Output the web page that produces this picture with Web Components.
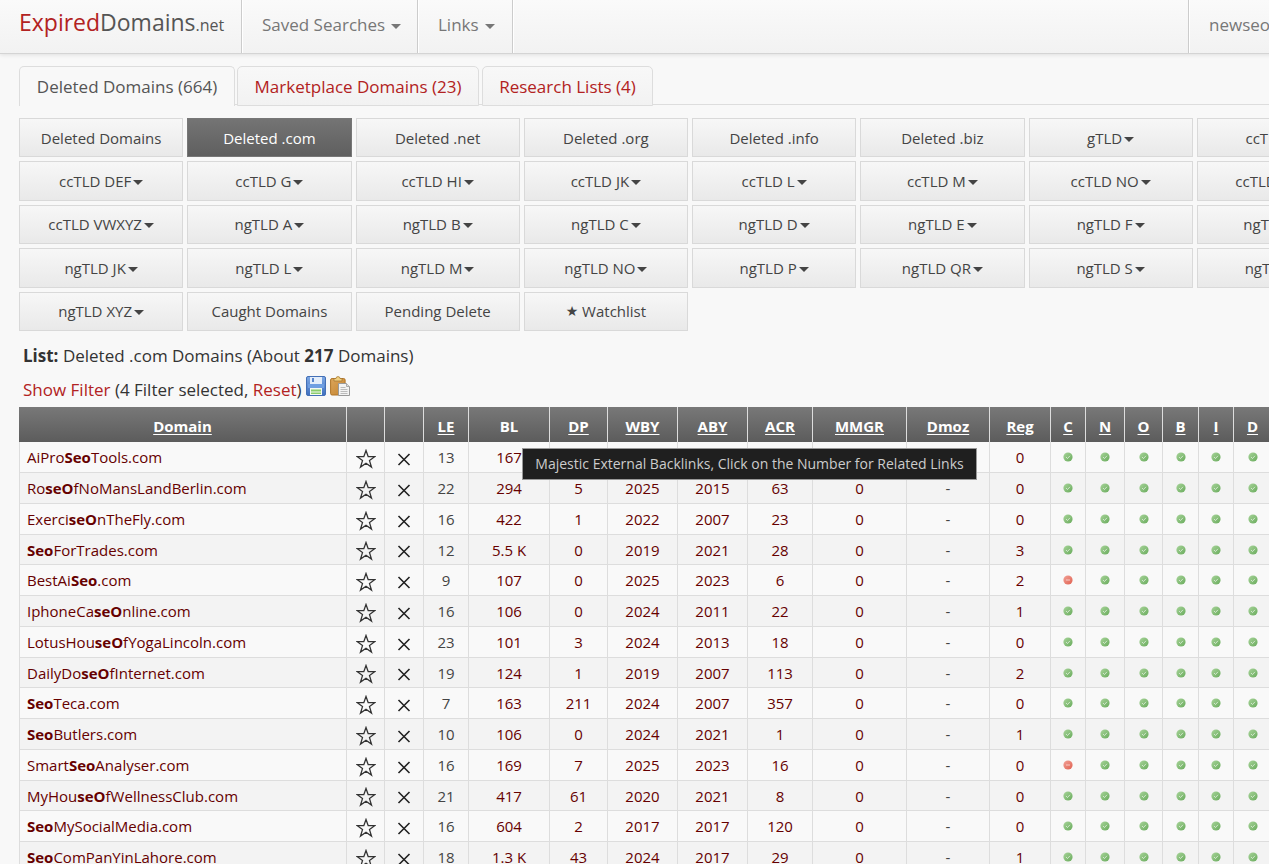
<!DOCTYPE html>
<html lang="en">
<head>
<meta charset="utf-8">
<title>Deleted .com Domains</title>
<style>
  html { overflow: hidden; }
  body { margin: 0; background: #f8f8f8; color: #333; font-family: "Open Sans", "Noto Sans", sans-serif; font-size: 15px; overflow: hidden; }
</style>
</head>
<body>
<site-header user="newseoc"></site-header>
<page-content>
  <list-tabs></list-tabs>
  <tld-nav></tld-nav>
  <list-summary></list-summary>
  <domain-table></domain-table>
</page-content>

<script>
class Base extends HTMLElement {
  constructor() {
    super();
    this.attachShadow({ mode: "open" });
  }
  connectedCallback() {
    this.shadowRoot.innerHTML = this.render();
  }
}

customElements.define("caret-down", class extends Base {
  render() {
    return `<style>
      :host { display: inline-block; width: 10px; height: 5px; vertical-align: middle; }
      svg { display: block; }
    </style><svg width="10" height="5" viewBox="0 0 10 5" aria-hidden="true"><path d="M0 0h10L5 5z" fill="currentColor"/></svg>`;
  }
});

customElements.define("site-header", class extends Base {
  render() {
    return `<style>
      :host { display: block; position: relative; }
      nav { display: flex; height: 53px; border-bottom: 1px solid #d4d4d4; background: linear-gradient(#fafafa, #f2f2f2); box-shadow: 0 1px 4px rgba(0,0,0,.1); margin-right: -100px; }
      a, button { font: inherit; font-size: 17px; line-height: 50px; color: #777; text-decoration: none; background: none; border: 0; margin: 0; padding: 0 20px; border-right: 1px solid #ccc; box-shadow: 1px 0 #fff; white-space: nowrap; text-align: left; }
      a.brand { width: 203px; padding: 0 19px; line-height: 44px; font-size: 23px; color: #555; }
      .brand b { font-weight: 400; color: #b22222; }
      .brand small { font-size: 16px; }
      button { padding-bottom: 3px; }
      caret-down { margin-left: 6px; }
      .saved { width: 176px; }
      .links { width: 95px; }
      .user { margin-left: auto; width: 181px; box-sizing: border-box; border-left: 1px solid #ccc; border-right: 0; box-shadow: inset 1px 0 #fff; }
    </style>
    <nav>
      <a class="brand" href="#home"><b>Expired</b>Domains<small>.net</small></a>
      <button class="saved">Saved Searches<caret-down></caret-down></button>
      <button class="links">Links<caret-down></caret-down></button>
      <a class="user" href="#account">${this.getAttribute("user")}</a>
    </nav>`;
  }
});

customElements.define("page-content", class extends Base {
  render() {
    return `<style>
      :host { display: block; padding-left: 19px; margin-right: -92px; }
    </style><slot></slot>`;
  }
});

customElements.define("list-tabs", class extends Base {
  render() {
    return `<style>
      :host { display: block; padding-top: 12px; }
      nav { display: flex; gap: 3px; height: 38px; border-bottom: 1px solid #ddd; }
      a { box-sizing: border-box; height: 40px; line-height: 39px; font-size: 17px; text-align: center; color: #b22222; text-decoration: none; border: 1px solid #ddd; border-radius: 5px 5px 0 0; background: linear-gradient(#f8f8f8, #f2f2f2); white-space: nowrap; }
      a[aria-current] { color: #555; background: #f8f8f8; border-bottom: 0; margin-right: -1px; }
      .one { width: 216px; } .two { width: 242px; } .three { width: 171px; }
    </style>
    <nav>
      <a class="one" href="#deleted" aria-current="page">Deleted Domains (664)</a>
      <a class="two" href="#market">Marketplace Domains (23)</a>
      <a class="three" href="#research">Research Lists (4)</a>
    </nav>`;
  }
});

customElements.define("tld-nav", class extends Base {
  render() {
    const items = ["Deleted Domains", "Deleted .com", "Deleted .net", "Deleted .org", "Deleted .info", "Deleted .biz", "gTLD", "ccTLD A",
      "ccTLD DEF", "ccTLD G", "ccTLD HI", "ccTLD JK", "ccTLD L", "ccTLD M", "ccTLD NO", "ccTLD PQR",
      "ccTLD VWXYZ", "ngTLD A", "ngTLD B", "ngTLD C", "ngTLD D", "ngTLD E", "ngTLD F", "ngTLD G",
      "ngTLD JK", "ngTLD L", "ngTLD M", "ngTLD NO", "ngTLD P", "ngTLD QR", "ngTLD S", "ngTLD T",
      "ngTLD XYZ", "Caught Domains", "Pending Delete", "<i>★</i> Watchlist"];
    const cell = t => t.includes("TLD")
      ? `<button>${t}<caret-down></caret-down></button>`
      : `<a href="#list"${t === "Deleted .com" ? ' aria-current="page"' : ""}>${t}</a>`;
    return `<style>
      :host { display: block; padding-top: 13px; }
      nav { display: grid; grid-template-columns: repeat(8, 1fr); grid-template-rows: repeat(5, 1fr); gap: 4px; height: 213px; }
      a, button { display: flex; align-items: center; justify-content: center; min-width: 0; margin: 0; padding: 0; font: inherit; font-size: 15px; color: #444; text-decoration: none; white-space: pre; border: 1px solid #d9d9d9; background: linear-gradient(#f7f7f7, #e9e9e9); }
      a[aria-current] { color: #fff; border-color: #777; background: linear-gradient(#747474, #5f5f5f); }
      caret-down { margin: 3px 0 0 2px; }
      i { font: 14px "DejaVu Sans", sans-serif; }
    </style><nav>${items.map(cell).join("")}</nav>`;
  }
});

customElements.define("list-summary", class extends Base {
  render() {
    return `<style>
      :host { display: block; padding: 8px 4px 0; font-size: 17px; }
      p { margin: 0; line-height: 34px; height: 34px; white-space: nowrap; }
      p.filter { display: flex; }
      a { color: #b22222; text-decoration: none; }
      svg { display: block; margin: 3px 0 0 4px; }
    </style>
    <p><b>List:</b> Deleted .com Domains (About <b>217</b> Domains)</p>
    <p class="filter"><span><a href="#filter">Show Filter</a> (4 Filter selected, <a href="#reset">Reset</a>)</span>
      <a href="#save" aria-label="Save"><svg width="20" height="20" viewBox="0 0 20 20">
        <defs><linearGradient id="f" x2="0" y2="1"><stop stop-color="#7da8e4"/><stop offset="1" stop-color="#3f6fbe"/></linearGradient></defs>
        <rect x=".5" y=".5" width="19" height="19" rx="1.5" fill="url(#f)" stroke="#4470b6"/>
        <rect x="4" y="1" width="12" height="7" fill="#e3edfa"/><rect x="6" y="2" width="2" height="4" fill="#5a86cc"/>
        <rect x="2" y="8" width="16" height="4" fill="#6f9fe2"/>
        <rect x="4" y="12" width="12" height="7" fill="#f4faf2"/><rect x="5" y="13.5" width="10" height="2" fill="#8acb6b"/><rect x="5" y="16.5" width="10" height="1.5" fill="#8acb6b"/>
      </svg></a>
      <a href="#copy" aria-label="Copy"><svg width="20" height="20" viewBox="0 0 20 20">
        <defs><linearGradient id="c" x2="1" y2="1"><stop stop-color="#dca55a"/><stop offset="1" stop-color="#c38430"/></linearGradient></defs>
        <rect x=".6" y="2.5" width="14.5" height="16.5" rx="1.5" fill="url(#c)" stroke="#b07528"/>
        <path d="M4 5V2.5h2Q6 .6 8 .6t2 1.9h2V5z" fill="#f0d080" stroke="#a77a35" stroke-width=".8"/>
        <path d="M8.5 7.5h8l3 3v9h-11z" fill="#f3f3f3" stroke="#999"/>
        <path d="M16.5 7.5v3h3" fill="#ddd" stroke="#aaa"/>
        <path d="M10.5 11.5h5M10.5 13.5h7M10.5 15.5h7M10.5 17.5h7" stroke="#bbb"/>
      </svg></a></p>`;
  }
});

customElements.define("status-dot", class extends Base {
  render() {
    const bad = this.hasAttribute("taken");
    const [hi, lo] = bad ? ["#f2a298", "#e0604f"] : ["#a8d49a", "#68ab5b"];
    return `<style>
      :host { display: block; width: 10px; height: 10px; margin: 0 auto; }
      svg { display: block; }
    </style><svg width="10" height="10" viewBox="0 0 10 10" role="img" aria-label="${bad ? "registered" : "available"}">
      <defs><linearGradient id="g" x2="1" y2="1"><stop stop-color="${hi}"/><stop offset="1" stop-color="${lo}"/></linearGradient></defs>
      <circle cx="5" cy="5" r="4.6" fill="url(#g)"/>
      <path d="${bad ? "M3 5h4" : "M3 5l1.5 1.5L7 3.800"}" fill="none" stroke="#fff" stroke-opacity=".6"/>
    </svg>`;
  }
});

customElements.define("info-tip", class extends Base {
  render() {
    return `<style>
      :host { display: block; box-sizing: border-box; height: 32px; line-height: 29px; padding: 0 9px; border: 1px solid #999; background: #1f1f1f; color: #ccc; font-size: 14px; white-space: nowrap; text-align: center; }
    </style><slot></slot>`;
  }
});

customElements.define("domain-table", class extends Base {
  render() {
    const cols = [["Domain", 328], ["", 38], ["", 39], ["LE", 45], ["BL", 81], ["DP", 58], ["WBY", 70], ["ABY", 70], ["ACR", 65],
      ["MMGR", 94], ["Dmoz", 83], ["Reg", 61], ["C", 35], ["N", 39], ["O", 38], ["B", 36], ["I", 35], ["D", 38]];
    const rows = [
      ["AiPro*Seo*Tools.com", 13, "167", 3, 2024, 2020, 12, 0],
      ["Ro*seO*fNoMansLandBerlin.com", 22, "294", 5, 2025, 2015, 63, 0],
      ["Exerci*seO*nTheFly.com", 16, "422", 1, 2022, 2007, 23, 0],
      ["*Seo*ForTrades.com", 12, "5.5 K", 0, 2019, 2021, 28, 3],
      ["BestAi*Seo*.com", 9, "107", 0, 2025, 2023, 6, 2, 1],
      ["IphoneCa*seO*nline.com", 16, "106", 0, 2024, 2011, 22, 1],
      ["LotusHou*seO*fYogaLincoln.com", 23, "101", 3, 2024, 2013, 18, 0],
      ["DailyDo*seO*fInternet.com", 19, "124", 1, 2019, 2007, 113, 2],
      ["*Seo*Teca.com", 7, "163", 211, 2024, 2007, 357, 0],
      ["*Seo*Butlers.com", 10, "106", 0, 2024, 2021, 1, 1],
      ["Smart*Seo*Analyser.com", 16, "169", 7, 2025, 2023, 16, 0, 1],
      ["MyHou*seO*fWellnessClub.com", 21, "417", 61, 2020, 2021, 8, 0],
      ["*Seo*MySocialMedia.com", 16, "604", 2, 2017, 2017, 120, 0],
      ["*Seo*ComPanYinLahore.com", 18, "1.3 K", 43, 2024, 2017, 29, 1]];
    // The open tooltip hides these cells of the first row.
    rows[0].splice(3, 4, "", "", "", "");
    const link = v => `<td>${v === "" ? "" : `<a href="#d">${v}</a>`}</td>`;
    const star = `<td><button aria-label="Add to watchlist"><svg width="20" height="20" viewBox="0 0 20 20"><path d="M10 1.5l2.2 6.2h6.6l-5.3 3.900 2 6.500L10 14.200l-5.500 3.900 2-6.500L1.200 7.700h6.600z" fill="none" stroke="#333" stroke-width="1.300"/></svg></button></td>`;
    const cross = `<td><button aria-label="Hide domain"><svg width="20" height="20" viewBox="0 0 20 20"><path d="M4.500 5l11 11M15.500 5l-11 11" fill="none" stroke="#222" stroke-width="1.600"/></svg></button></td>`;
    const row = ([name, le, bl, dp, wby, aby, acr, reg, bad], n) => `<tr>
      <td class="name"><a href="#d">${name.replace(/\*(\w+)\*/, "<b>$1</b>")}</a></td>${star}${cross}
      <td>${le}</td>${[bl, dp, wby, aby, acr, n ? 0 : ""].map(link).join("")}<td>${n ? "-" : ""}</td>${link(reg)}
      ${[..."CNOBID"].map((c, i) => `<td><status-dot${bad && !i ? " taken" : ""}></status-dot></td>`).join("")}</tr>`;
    return `<style>
      :host { display: block; position: relative; }
      table { table-layout: fixed; width: 1253px; border-collapse: separate; border-spacing: 0; font-size: 15px; }
      th { box-sizing: border-box; height: 35px; padding: 2px 0 0; line-height: 20px; color: #fff; border-right: 1px solid #ddd; font-size: 15px; }
      thead { background: linear-gradient(#787878, #5c5c5c); }
      th a { color: #fff; text-underline-offset: 2px; }
      tbody tr { height: 31px; background: #f9f9f9; }
      tbody tr:nth-child(even) { background: #f3f3f3; }
      tbody tr:nth-child(4n) { height: 30px; }
      td { box-sizing: border-box; padding: 0; line-height: 22px; text-align: center; vertical-align: middle; border-right: 1px solid #ddd; border-bottom: 1px solid #ddd; color: #444; white-space: nowrap; }
      td a { color: #600; text-decoration: none; }
      .name { text-align: left; padding-left: 7px; border-left: 1px solid #ddd; }
      button { display: block; margin: 0 auto; padding: 3px 0 0; border: 0; background: none; }
      svg { display: block; }
      info-tip { position: absolute; left: 503px; top: 41px; width: 455px; }
    </style>
    <table>
      <colgroup>${cols.map(c => `<col style="width:${c[1]}px">`).join("")}</colgroup>
      <thead><tr>${cols.map(([n]) => `<th scope="col">${!n ? "" : n === "BL" ? n : `<a href="#sort">${n}</a>`}</th>`).join("")}</tr></thead>
      <tbody>${rows.map(row).join("")}</tbody>
    </table>
    <info-tip role="tooltip">Majestic External Backlinks, Click on the Number for Related Links</info-tip>`;
  }
});
</script>
</body>
</html>
